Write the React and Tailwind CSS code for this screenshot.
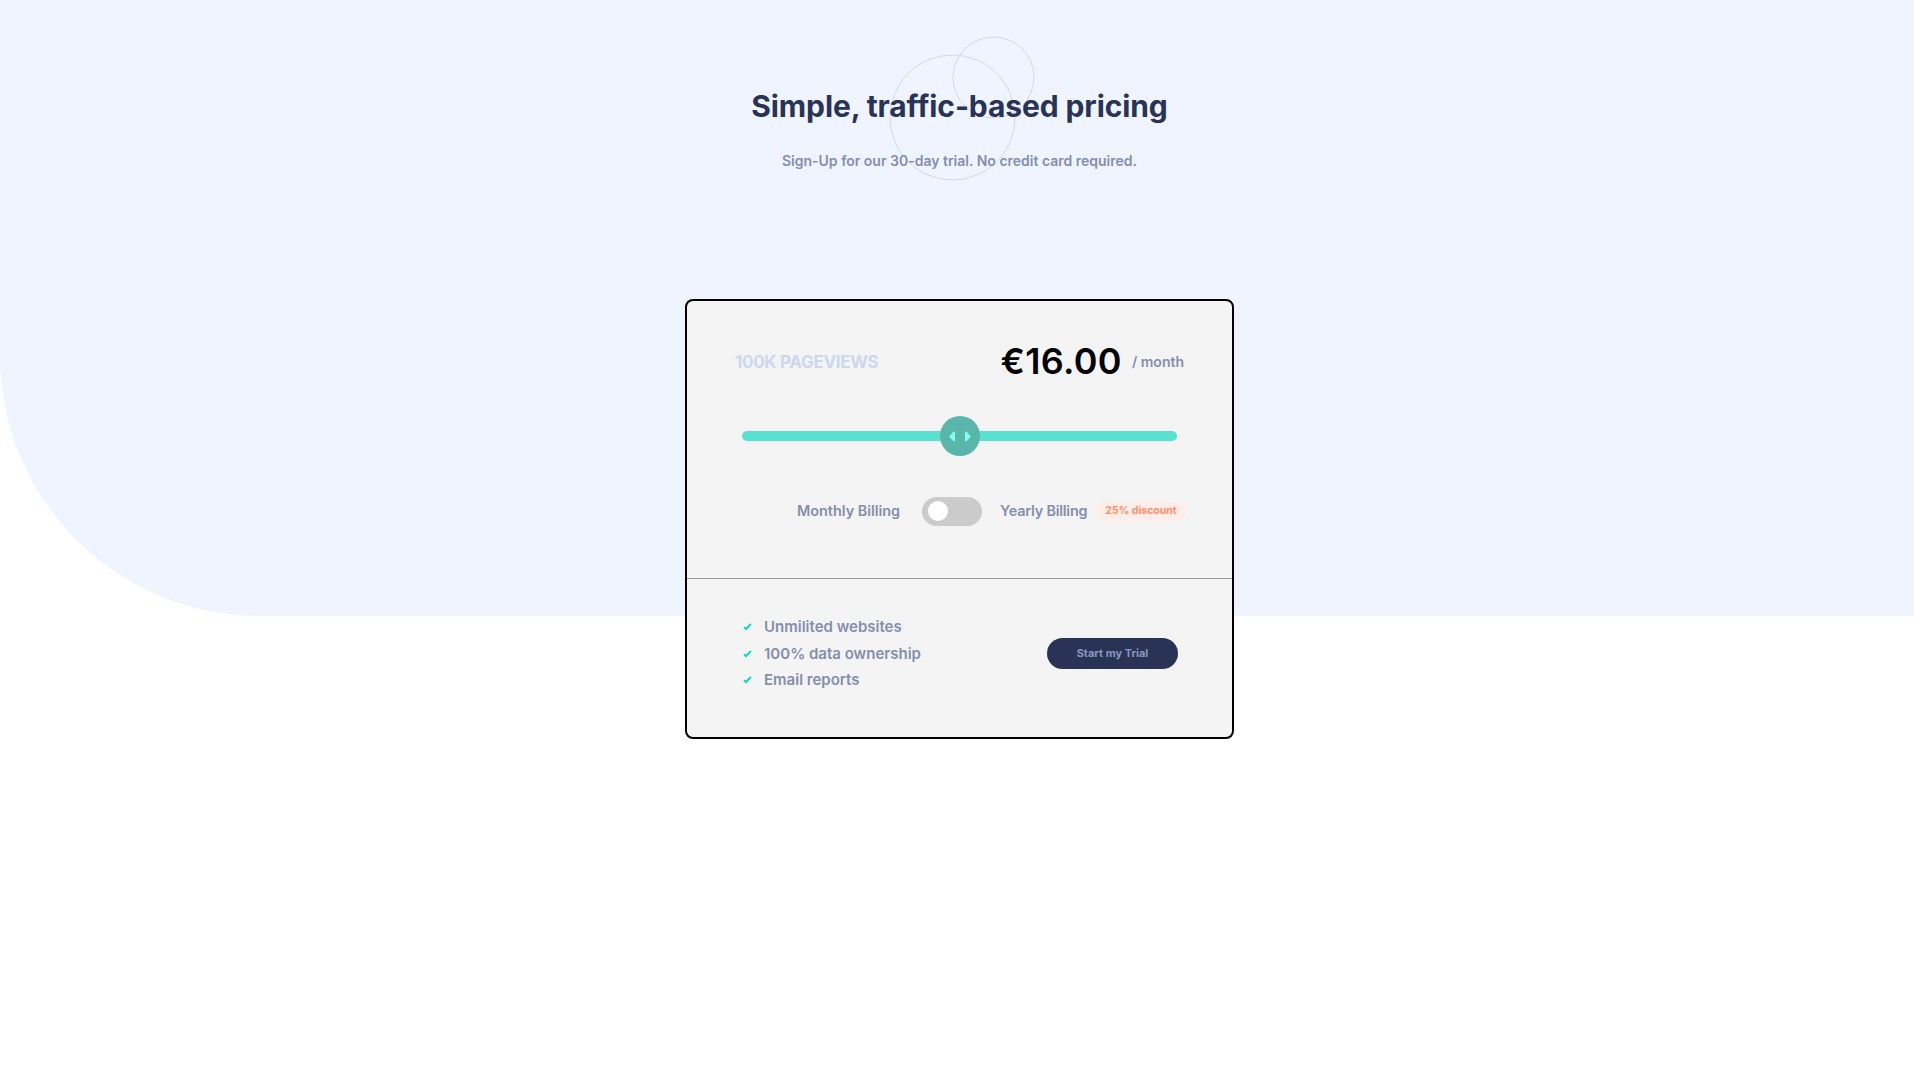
import { useState } from "react";

const features = ["Unmilited websites", "100% data ownership", "Email reports"];

const SliderIcon = () => (
  <svg width="22" height="13" viewBox="0 0 22 13">
    <g fill="#80FFF3" fillRule="evenodd">
      <path d="M16 2.558v7.884a1 1 0 001.735.679l3.639-3.943a1 1 0 000-1.356l-3.64-3.943A1 1 0 0016 2.558zM6 2.558v7.884a1 1 0 01-1.735.679L.626 7.178a1 1 0 010-1.356l3.64-3.943A1 1 0 016 2.558z" />
    </g>
  </svg>
);

const CheckIcon = () => (
  <svg width="9" height="8" viewBox="0 0 9 8">
    <path fill="none" stroke="#10D8C4" strokeWidth="2" d="M1 4.134l1.907 1.908L7.949 1" />
  </svg>
);

const App = () => {
  const [yearly, setYearly] = useState(false);

  return (
    <div className="min-h-screen bg-white font-['Inter',sans-serif]">
      <div className="h-[616px] rounded-bl-[260px] bg-[#F0F4FE] flex flex-col items-center pl-[5px]">
        {/* heading with the circle pattern behind it */}
        <div className="relative mt-[88px] flex flex-col items-center">
          <svg
            width="146"
            height="145"
            className="absolute top-[-52px] left-[calc(50%-70px)]"
          >
            <g fill="none" stroke="#CFD8EF">
              <circle cx="63.5" cy="81.5" r="62.5" />
              <circle cx="104.5" cy="41.5" r="40.5" />
            </g>
          </svg>
          <h1 className="relative text-[30px] leading-[36px] font-bold text-[#293356] tracking-[-0.1px]">
            Simple, traffic-based pricing
          </h1>
          <p className="relative mt-[27px] text-[14px] leading-[20px] font-semibold text-[#848EAD]">
            Sign-Up for our 30-day trial. No credit card required.
          </p>
        </div>

        {/* pricing card */}
        <div className="mt-[128px] w-[549px] border-2 border-black rounded-lg bg-[#F4F4F4] flex flex-col">
          <div className="h-[277px] flex flex-col">
            <div className="mt-[38px] h-[44px] px-[48px] flex items-center justify-between">
              <span className="pt-[4px] text-[17px] font-bold text-[#CDD7EE] tracking-[-0.3px]">100K PAGEVIEWS</span>
              <div className="flex items-center">
                <span className="text-[36px] leading-none font-semibold text-black tracking-[0.3px]">€16.00</span>
                <span className="ml-[10px] text-[14px] font-semibold text-[#848EAD]">/ month</span>
              </div>
            </div>

            <div className="mt-[33px] h-[40px] px-[55px] flex items-center">
              <div className="relative w-full h-[10px] rounded-full bg-[#58E0D0]">
                <div className="absolute left-1/2 top-1/2 -translate-x-1/2 -translate-y-1/2 w-[40px] h-[40px] rounded-full bg-[#5AB5AA] flex items-center justify-center">
                  <SliderIcon />
                </div>
              </div>
            </div>

            <div className="mt-[40px] h-[30px] pl-[110px] flex items-center text-[14.4px] font-semibold text-[#848EAD]">
              <span>Monthly Billing</span>
              <button
                type="button"
                onClick={() => setYearly(!yearly)}
                className={
                  yearly
                    ? "ml-[22px] w-[60px] h-[29px] rounded-full bg-[#10D8C4] flex items-center justify-end pr-[6px]"
                    : "ml-[22px] w-[60px] h-[29px] rounded-full bg-[#CBCBCB] flex items-center pl-[6px]"
                }
              >
                <span className="w-[20px] h-[20px] rounded-full bg-white" />
              </button>
              <span className="ml-[18px] tracking-[-0.2px]">Yearly Billing</span>
              <span className="ml-[9px] h-[20px] px-[9px] rounded-full bg-[#FEEDE8] text-[10.5px] font-bold text-[#FF8D68] flex items-center">
                25% discount
              </span>
            </div>
          </div>

          <div className="h-[159px] border-t border-[#9A9A9A] pt-[35px] pl-[56px] pr-[54px] flex items-start justify-between">
            <ul>
              {features.map((f) => (
                <li key={f} className="h-[26.5px] flex items-center">
                  <CheckIcon />
                  <span className="ml-[12px] text-[15px] font-semibold text-[#848EAD]">{f}</span>
                </li>
              ))}
            </ul>
            <button
              type="button"
              className="mt-[24px] w-[131px] h-[31px] rounded-full bg-[#293356] text-[11px] font-bold text-[#8A96C0]"
            >
              Start my Trial
            </button>
          </div>
        </div>
      </div>
    </div>
  );
};

export default App;
